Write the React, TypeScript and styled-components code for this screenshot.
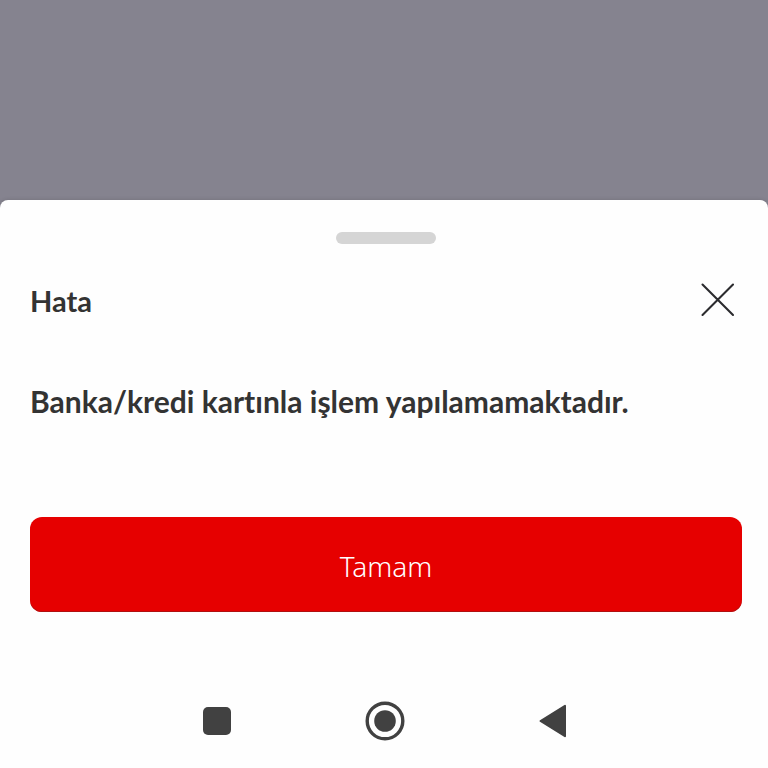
import React from "react";
import styled, { createGlobalStyle } from "styled-components";

const GlobalStyle = createGlobalStyle`
  *, *::before, *::after { box-sizing: border-box; }
  body {
    margin: 0;
    background: #85838f;
    font-family: Lato, "Noto Sans", sans-serif;
    font-variant-ligatures: none;
    color: #333333;
  }
  button { font: inherit; color: inherit; border: 0; padding: 0; cursor: pointer; }
`;

const Screen = styled.div`
  min-height: 100vh;
  display: flex;
  flex-direction: column;
  justify-content: flex-end;
  background: #85838f;
`;

const Sheet = styled.section`
  display: flex;
  flex-direction: column;
  padding: 32px 26px 23px 30px;
  border-radius: 8px 8px 0 0;
  background: #fefefe;
  box-shadow: 0 0 4px rgba(0, 0, 0, 0.15);
`;

const Handle = styled.div`
  align-self: center;
  width: 100px;
  height: 12px;
  border-radius: 6px;
  background: #d5d5d5;
`;

const Header = styled.header`
  display: flex;
  align-items: center;
  justify-content: space-between;
  height: 48px;
  margin-top: 32px;
`;

const Title = styled.h1`
  margin: 0;
  padding-top: 2px;
  font-size: 29px;
  line-height: 40px;
  font-weight: 700;
`;

const CloseButton = styled.button`
  display: flex;
  align-items: center;
  justify-content: center;
  width: 48px;
  height: 48px;
  background: transparent;
`;

const Message = styled.p`
  margin: 57px 0 0;
  font-size: 30px;
  line-height: 40px;
  font-weight: 700;
`;

const PrimaryButton = styled.button`
  && {
    height: 95px;
    margin-top: 96px;
    padding-top: 2px;
    border-radius: 12px;
    box-shadow: inset 0 -1px 0 #b01010;
    background: #e60000;
    color: #ffffff;
    font-family: "Noto Sans", "Open Sans", sans-serif;
    font-size: 28px;
    line-height: 40px;
    font-weight: 300;
  }
`;

const SystemNav = styled.nav`
  display: grid;
  grid-template-columns: repeat(3, 168px);
  justify-content: center;
  margin-top: 85px;
  padding-right: 2px;
`;

const NavButton = styled.button`
  display: flex;
  align-items: center;
  justify-content: center;
  height: 48px;
  background: transparent;
`;

export default function App() {
  return (
    <>
      <GlobalStyle />
      <Screen>
        <Sheet role="dialog" aria-modal="true" aria-labelledby="sheet-title">
          <Handle />
          <Header>
            <Title id="sheet-title">Hata</Title>
            <CloseButton type="button" aria-label="Kapat">
              <svg width="36" height="36" viewBox="0 0 36 36" fill="none" stroke="#2b2b2e" strokeWidth="2.1" strokeLinecap="round">
                <path d="M2.5 2.5 33 33M33 2.5 2.5 33" />
              </svg>
            </CloseButton>
          </Header>
          <Message>Banka/kredi kartınla işlem yapılamamaktadır.</Message>
          <PrimaryButton type="button">Tamam</PrimaryButton>
          <SystemNav aria-label="Sistem">
            <NavButton type="button" aria-label="Son uygulamalar">
              <svg width="28" height="28" viewBox="0 0 28 28">
                <rect width="28" height="28" rx="5" fill="#414141" />
              </svg>
            </NavButton>
            <NavButton type="button" aria-label="Ana ekran">
              <svg width="40" height="40" viewBox="0 0 40 40">
                <circle cx="20" cy="20" r="17.8" fill="none" stroke="#414141" strokeWidth="3.4" />
                <circle cx="20" cy="20" r="10.8" fill="#414141" />
              </svg>
            </NavButton>
            <NavButton type="button" aria-label="Geri">
              <svg width="28" height="34" viewBox="0 0 28 34">
                <path d="M1.5 17 26 1.8V32.2Z" fill="#414141" stroke="#414141" strokeWidth="2" strokeLinejoin="round" />
              </svg>
            </NavButton>
          </SystemNav>
        </Sheet>
      </Screen>
    </>
  );
}
